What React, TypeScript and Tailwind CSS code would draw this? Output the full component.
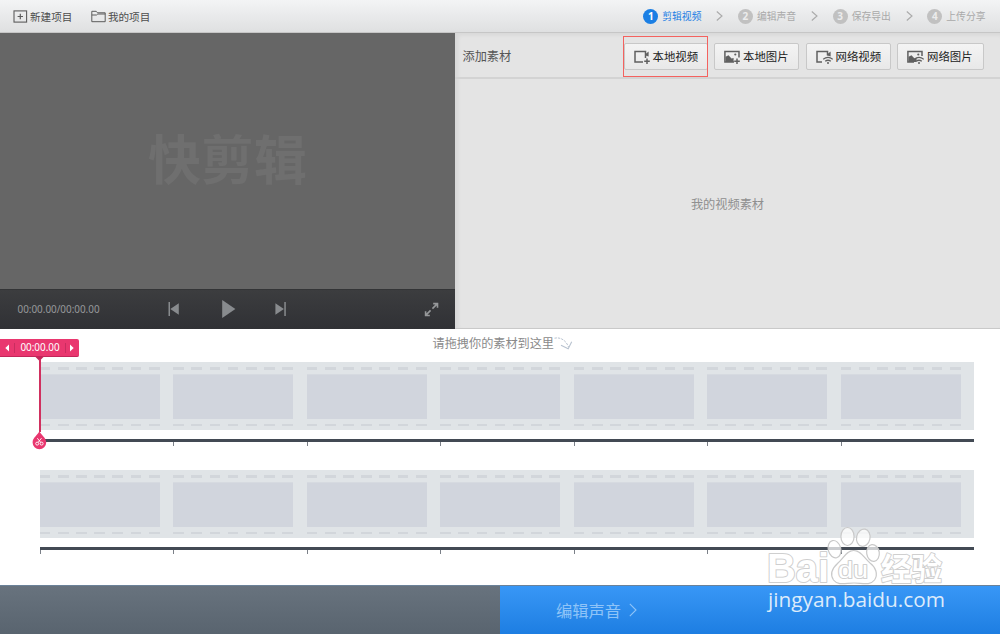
import React from 'react';

const FRAMES = [0, 1, 2, 3, 4, 5, 6];

const steps = [
  { id: 1, label: '剪辑视频', active: true },
  { id: 2, label: '编辑声音', active: false },
  { id: 3, label: '保存导出', active: false },
  { id: 4, label: '上传分享', active: false },
];

type SourceKind = 'video' | 'image';
type SourceOrigin = 'local' | 'web';

interface SourceIconProps {
  kind: SourceKind;
  origin: SourceOrigin;
}

const SourceIcon: React.FC<SourceIconProps> = ({ kind, origin }) => (
  <svg className={origin === 'web' ? 'w-[17px] h-[14px] shrink-0' : 'w-4 h-[14px] shrink-0'} viewBox={origin === 'web' ? '0 0 17 14' : '0 0 16 14'} fill="none" stroke="#606060" strokeWidth="1.5">
    {kind === 'video' ? (
      <>
        <path d={origin === 'web' ? 'M6 12H1V1.5H11.5V5.5' : 'M9 12H1V1.5H11.5V8'} />
        <path d="M11.5 4 14.6 1.6V6.6L11.5 5.4Z" fill="#606060" stroke="none" />
      </>
    ) : (
      <>
        <path d={origin === 'web' ? 'M7 12H.9V1.4H15V6' : 'M10 12H.9V1.4H15V7.6'} />
        <path d="M1.5 12V6.8L4.5 5.2 7.5 8.6 9.6 8 9.6 12Z" fill="#606060" stroke="none" />
        <circle cx="11.3" cy="4.5" r="1.1" fill="#606060" stroke="none" />
      </>
    )}
    {origin === 'local' ? (
      <path d="M13 8.4V14M10.2 11.2H15.8" strokeWidth="1.5" />
    ) : (
      <>
        <path d="M7.2 9.3Q12 5.6 16.8 9.3M9.2 11.3Q12 9.2 14.8 11.3" strokeWidth="1.3" />
        <circle cx="12" cy="12.9" r="1" fill="#606060" stroke="none" />
      </>
    )}
  </svg>
);

const sources: { label: string; kind: SourceKind; origin: SourceOrigin }[] = [
  { label: '本地视频', kind: 'video', origin: 'local' },
  { label: '本地图片', kind: 'image', origin: 'local' },
  { label: '网络视频', kind: 'video', origin: 'web' },
  { label: '网络图片', kind: 'image', origin: 'web' },
];

const Header = () => (
  <header className="h-[33px] shrink-0 flex items-center bg-linear-to-b from-[#f3f4f5] to-[#dfe0e1] border-b border-[#c6c6c6] text-[#4d4d4d]">
    <div className="flex items-center text-[10.6px] flex-1 pt-[2px]">
      <button className="ml-[13px] flex items-center gap-[2px]">
        <svg className="w-[15px] h-[13px]" viewBox="0 0 15 13" fill="none" stroke="#5c5c5c">
          <rect x="1" y=".9" width="12.6" height="11.2" strokeWidth="1.1" />
          <path d="M7.3 3.8V9.2M4.6 6.5H10" strokeWidth="1.2" />
        </svg>
        新建项目
      </button>
      <button className="ml-[18.5px] flex items-center gap-[2px]">
        <svg className="w-[15px] h-[13px]" viewBox="0 0 15 13" fill="none" stroke="#5c5c5c">
          <path d="M.8 11.7V1.3H5.2L6.5 2.8H14.2V11.7ZM.8 5H5.5L6.8 4H14.2" strokeWidth="1" />
        </svg>
        我的项目
      </button>
    </div>
    <nav className="flex items-center mr-[14px]">
      {steps.map(({ id, label, active }) => (
        <React.Fragment key={id}>
          {id > 1 && (
            <svg className="w-[7px] h-[10px] mx-[14.5px]" viewBox="0 0 7 10" fill="none" stroke="#aaaaaa" strokeWidth="1.1">
              <path d="M.8 .5 6 5 .8 9.5" />
            </svg>
          )}
          <div className="flex items-center gap-[4px]">
            <span className={`w-[15px] h-[15px] rounded-full flex items-center justify-center text-[10px] leading-none font-bold font-['Noto_Sans'] ${active ? 'bg-[#1b7fe4] text-white' : 'bg-[#c1c1c1] text-[#ececec]'}`}>
              {id}
            </span>
            <span className={`w-[39.7px] pt-px text-[9.8px] whitespace-nowrap ${active ? 'text-[#1b7fe4]' : 'text-[#a9a9a9]'}`}>{label}</span>
          </div>
        </React.Fragment>
      ))}
    </nav>
  </header>
);

const Player = () => (
  <section className="w-[455px] shrink-0 flex flex-col bg-[#666666]">
    <div className="flex-1 flex items-center justify-center pb-[8px] text-[53px] leading-none font-bold text-[#6f6f6f]">快剪辑</div>
    <div className="h-10 flex items-center pb-px bg-linear-to-b from-[#3c3d3f] to-[#303135] border-t border-[#333436]">
      <span className="ml-[17.5px] w-[149.5px] pt-px text-[9.9px] text-[#96989a] font-['Noto_Sans']">00:00.00/00:00.00</span>
      <svg className="w-[12px] h-[14px]" viewBox="0 0 12 14" fill="#888b8e">
        <path d="M1.5 0H3V14H1.5ZM11.8 1.3V12.7L3.3 7Z" />
      </svg>
      <svg className="ml-[42px] w-[15px] h-[18px]" viewBox="0 0 15 18" fill="#888b8e">
        <path d="M1.2 0 14.4 9 1.2 18Z" />
      </svg>
      <svg className="ml-[39px] w-[12px] h-[14px]" viewBox="0 0 12 14" fill="#888b8e">
        <path d="M.4 1.3 8.9 7 .4 12.7ZM9.3 0H10.8V14H9.3Z" />
      </svg>
      <svg className="ml-auto mr-[16px] w-[15px] h-[15px]" viewBox="0 0 16 16" fill="none" stroke="#96989a" strokeWidth="1.7">
        <path d="M9.8 1.7H14.4V6.2M14 2 9 7M1.7 9.8V14.4H6.2M2 14 7 9" />
      </svg>
    </div>
  </section>
);

const Library = () => (
  <section className="flex-1 flex flex-col bg-[#e4e4e4] border-b border-[#c9c9c9] shadow-[inset_3px_2px_4px_rgba(0,0,0,0.06)]">
    <div className="h-[46px] flex items-center border-b-2 border-[#d3d3d3] pt-[2px] pl-[7.5px] pr-4">
      <span className="text-[12.2px] text-[#555555] flex-1">添加素材</span>
      <div className="flex gap-[6.5px]">
        {sources.map(({ label, kind, origin }) => (
          <div key={label} className="relative">
            <button className={`h-[27px] flex items-center gap-[3px] rounded-[2px] border border-[#c8c8c8] bg-linear-to-b from-[#f4f4f4] to-[#e8e8e8] pt-px pl-[9px] text-[11.4px] text-[#222222] whitespace-nowrap ${label === '网络图片' ? 'w-[87px]' : label === '本地视频' ? 'w-[84px]' : 'w-[85px]'}`}>
              <SourceIcon kind={kind} origin={origin} />
              {label}
            </button>
            {label === '本地视频' && (
              <div className="absolute left-[-1px] top-[-7px] w-[85px] h-[41px] border border-[#f4625f]" />
            )}
          </div>
        ))}
      </div>
    </div>
    <div className="flex-1 flex items-center justify-center pt-[2px] text-[12.2px] text-[#8f8f8f]">我的视频素材</div>
  </section>
);

const Perforations = () => (
  <div className="flex w-[120px] h-[2.5px] justify-between">
    {FRAMES.map((i) => (
      <span key={i} className="w-[10.7px] h-full bg-[#d2d6db]" />
    ))}
  </div>
);

const Track = () => (
  <div className="w-[934px]">
    <div className="h-[68px] bg-[#e0e4e7] flex gap-[13.5px] overflow-hidden">
      {FRAMES.map((i) => (
        <div key={i} className="w-[120px] shrink-0 pt-[5px]">
          <Perforations />
          <div className="mt-[4px] mb-[4.5px] h-[45.5px] bg-[#d1d5dd] border-t border-[#d6dae0]" />
          <Perforations />
        </div>
      ))}
    </div>
    <div className="mt-[9px] h-[2.5px] bg-[#434a54]" />
    <div className="flex gap-[132.5px]">
      {FRAMES.map((i) => (
        <span key={i} className="w-px h-[4px] bg-[#7b8088]" />
      ))}
    </div>
  </div>
);

const Playhead = () => (
  <div className="absolute left-0 top-[10px] w-[79px] flex flex-col items-center">
    <div className="w-full h-[18px] rounded-r-[2px] bg-[#e9376f] border-b border-[#c3265a] flex items-center text-white text-[9.9px] font-['Noto_Sans']">
      <svg className="w-[4px] h-[8px] ml-[5px]" viewBox="0 0 4 8" fill="white">
        <path d="M4 .5V7.5L.3 4Z" />
      </svg>
      <span className="ml-[5px] w-px h-[10px] bg-[#c92d60]" />
      <span className="flex-1 text-center">00:00.00</span>
      <span className="mr-[4px] w-px h-[10px] bg-[#c92d60]" />
      <svg className="w-[4px] h-[8px] mr-[5px]" viewBox="0 0 4 8" fill="white">
        <path d="M0 .5V7.5L3.7 4Z" />
      </svg>
    </div>
    <svg className="w-[9px] h-[4px]" viewBox="0 0 9 4" fill="#c3265a">
      <path d="M.5 0H8.5L4.5 4Z" />
    </svg>
    <div className="-mt-[2px] w-[2px] h-[73px] bg-[#d0305f]" />
    <svg className="-mt-px w-[15px] h-[19px]" viewBox="0 0 15 19">
      <path d="M7.4 0C8.3 3.5 14.2 6.4 14.2 11.4A6.8 6.8 0 0 1 .6 11.4C.6 6.4 6.5 3.5 7.4 0Z" fill="#e9376f" />
      <g fill="none" stroke="#ffffff" strokeWidth=".9">
        <circle cx="5.2" cy="12.6" r="1.5" />
        <circle cx="9.6" cy="12.6" r="1.5" />
        <path d="M5.3 7.2 8.8 11.5M9.5 7.2 6 11.5" />
      </g>
    </svg>
  </div>
);

const Timeline = () => (
  <section className="relative h-[256px] shrink-0 bg-white pl-[39.6px]">
    <div className="h-[33px] flex items-start pl-[393px] text-[12.15px] leading-[28px] text-[#8a8a8a]">
      请拖拽你的素材到这里
      <svg className="mt-[7px] w-[19px] h-[15px]" viewBox="0 0 19 15" fill="none" stroke="#b9c3d0">
        <path d="M.5 2.2C6 .8 12 4 14.5 11" strokeDasharray="2.4 1" />
        <path d="M7 9.2 14.2 12.7 17.7 5.7" strokeWidth="1.1" />
      </svg>
    </div>
    <Track />
    <div className="h-[24.5px]" />
    <Track />
    <Playhead />
  </section>
);

const Watermark = () => (
  <div className="absolute left-[764px] top-[525px] w-[184px] h-[90px]">
    <svg className="w-[184px] h-[62px] overflow-visible" viewBox="0 0 184 62">
      <g fill="#ffffff" fillOpacity=".72" stroke="#c9c9c9" strokeWidth="1.2">
        <ellipse cx="70.5" cy="24.2" rx="6.3" ry="8.8" transform="rotate(-14 70.5 24.2)" />
        <ellipse cx="83.5" cy="11.5" rx="6.6" ry="9" />
        <ellipse cx="99.3" cy="12.7" rx="6.7" ry="8.7" transform="rotate(12 99.3 12.7)" />
        <ellipse cx="109" cy="28" rx="6.3" ry="8.4" transform="rotate(-8 109 28)" />
        <path d="M89.7 25.5C83 25.5 79.5 33 74 38C68.5 43 65.5 49 69.5 55C74 61 82 58 90 58C98 58 106 61 110.5 55C114.5 49 111.5 42 106 38C100 33 97 25.5 89.7 25.5Z" />
      </g>
      <g fill="#ffffff" stroke="#cfcfcf" strokeWidth="2" paintOrder="stroke" strokeLinejoin="round">
        <text x="3" y="57" fontFamily="Liberation Sans" fontWeight="bold" fontSize="40" textLength="62" lengthAdjust="spacingAndGlyphs">Bai</text>
        <text x="74" y="53" fontFamily="Liberation Sans" fontSize="24" textLength="30" lengthAdjust="spacingAndGlyphs">du</text>
        <text x="117" y="55" fontFamily="Noto Sans CJK SC" fontWeight="bold" fontSize="31" textLength="61" lengthAdjust="spacingAndGlyphs">经验</text>
      </g>
    </svg>
    <div className="-mt-[2.5px] pl-[4px] text-[20.8px] leading-[28px] text-[#dcebfb] font-['Open_Sans'] whitespace-nowrap">jingyan.baidu.com</div>
  </div>
);

const Footer = () => (
  <footer className="h-[49px] shrink-0 flex border-t border-[#6b8299]">
    <div className="w-[500px] bg-linear-to-b from-[#68737e] to-[#59646f]" />
    <button className="flex-1 flex items-center pl-14 bg-linear-to-b from-[#3897f6] to-[#1d7ee2] text-[16.3px] text-[#8fc4f8]">
      编辑声音
      <svg className="ml-2 w-[8px] h-[14px]" viewBox="0 0 8 14" fill="none" stroke="#8fc4f8" strokeWidth="1.1">
        <path d="M.8 .8 7 7 .8 13.2" />
      </svg>
    </button>
  </footer>
);

export default function App() {
  return (
    <div className="relative w-[1000px] h-[634px] overflow-hidden flex flex-col bg-white font-['Noto_Sans_CJK_SC',sans-serif]">
      <Header />
      <main className="h-[296px] shrink-0 flex">
        <Player />
        <Library />
      </main>
      <Timeline />
      <Footer />
      <Watermark />
    </div>
  );
}
